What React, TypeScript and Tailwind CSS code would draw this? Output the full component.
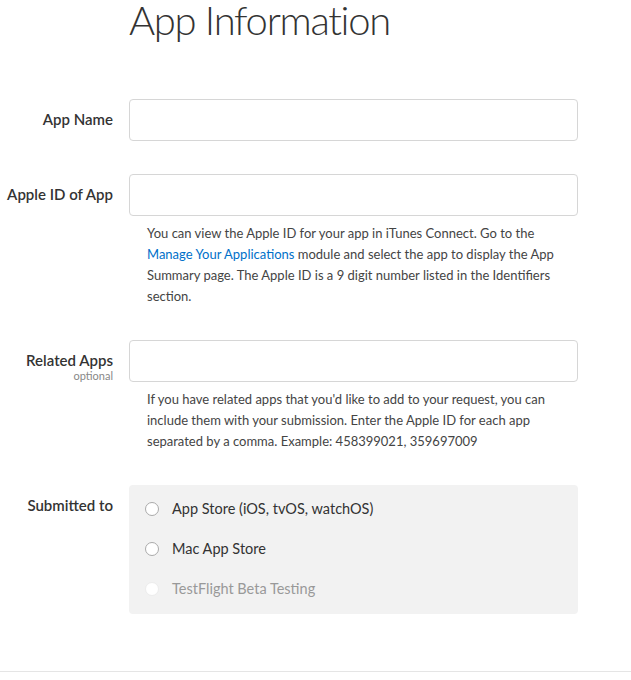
const font = { fontFamily: '"Lato", "Open Sans", sans-serif' };

interface Option {
    label: string;
    disabled?: boolean;
}

const options: Option[] = [
    { label: 'App Store (iOS, tvOS, watchOS)' },
    { label: 'Mac App Store' },
    { label: 'TestFlight Beta Testing', disabled: true },
];

const Row = ({ label, hint, children }: { label: string; hint?: string; children: React.ReactNode }) => (
    <div className="flex gap-4">
        <div className="w-[113px] shrink-0 pt-[10px] text-right">
            <div className="text-[15px] leading-5 font-semibold text-[#333]">{label}</div>
            {hint && <div className="text-[11px] leading-3 text-[#888]">{hint}</div>}
        </div>
        <div className="w-[449px]">{children}</div>
    </div>
);

const Input = () => <input className="block h-[42px] w-full rounded-[4px] border border-[#d6d6d6] bg-white px-3 outline-none" />;

export default function App() {
    return (
        <div className="min-h-[680px] bg-white text-[#333]" style={font}>
            <h1 className="pl-[129px] text-[40px] leading-10 font-light tracking-[-1.3px] text-[#333]">App Information</h1>

            <div className="mt-[59px] flex flex-col gap-[33px]">
                <Row label="App Name">
                    <Input />
                </Row>

                <Row label="Apple ID of App">
                    <Input />
                    <p className="mt-[7px] pl-[18px] pr-4 text-[13px] leading-[21px] text-[#444]">
                        You can view the Apple ID for your app in iTunes Connect. Go to the{' '}
                        <a href="#" className="text-[#0070c9]">Manage Your Applications</a> module and select the app to
                        display the App Summary page. The Apple ID is a 9 digit number listed in the Identifiers section.
                    </p>
                </Row>

                <Row label="Related Apps" hint="optional">
                    <Input />
                    <p className="mt-[7px] pl-[18px] pr-4 text-[13px] leading-[21px] text-[#444]">
                        If you have related apps that you'd like to add to your request, you can include them with your
                        submission. Enter the Apple ID for each app separated by a comma. Example: 458399021, 359697009
                    </p>
                </Row>

                <Row label="Submitted to">
                    <div className="flex h-[129px] flex-col gap-[26px] rounded-[4px] bg-[#f2f2f2] px-4 pt-[17px]">
                        {options.map((o) => (
                            <label key={o.label} className="flex items-center gap-[13px]">
                                <span
                                    className={`h-[14px] w-[14px] rounded-full border bg-white ${o.disabled ? 'border-[#ececec] bg-[#f0f0f0]' : 'border-[#aaa]'}`}
                                />
                                <span className={`text-[14.5px] leading-[14px] ${o.disabled ? 'text-[#999]' : 'text-[#333]'}`}>
                                    {o.label}
                                </span>
                            </label>
                        ))}
                    </div>
                </Row>
            </div>

            <div className="mt-[57px] border-t border-[#e5e5e5]" />
        </div>
    );
}
